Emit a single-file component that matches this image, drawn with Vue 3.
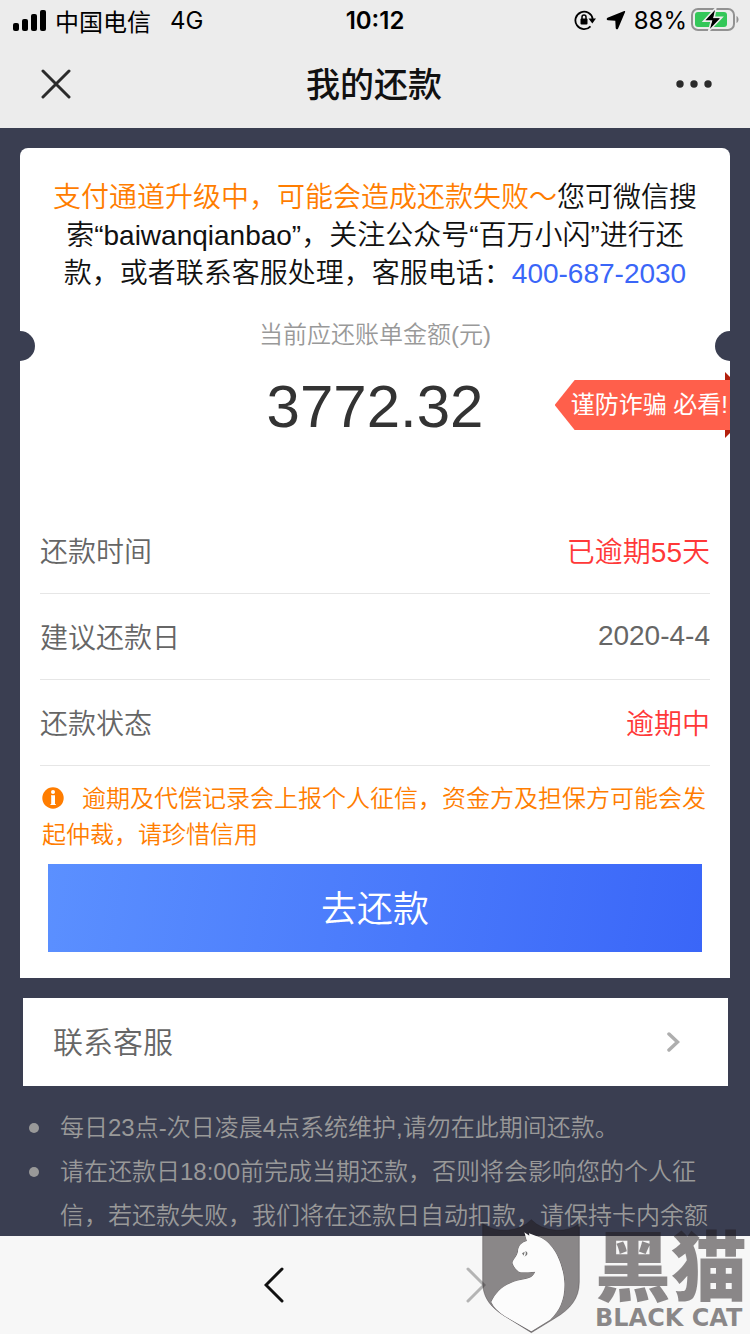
<script setup>
const bill = {
  amount: '3772.32',
  rows: [
    { label: '还款时间', value: '已逾期55天', warn: true },
    { label: '建议还款日', value: '2020-4-4', warn: false },
    { label: '还款状态', value: '逾期中', warn: true },
  ],
}

const notes = [
  '每日23点-次日凌晨4点系统维护,请勿在此期间还款。',
  '请在还款日18:00前完成当期还款，否则将会影响您的个人征信，若还款失败，我们将在还款日自动扣款，请保持卡内余额',
]
</script>

<template>
  <div class="page">
    <div class="status-bar">
      <div class="status-side">
        <svg class="signal" width="34" height="22" viewBox="0 0 34 22">
          <rect x="1" y="14" width="6" height="8" rx="2" />
          <rect x="10" y="10" width="6" height="12" rx="2" />
          <rect x="19" y="5" width="6" height="17" rx="2" />
          <rect x="28" y="1" width="6" height="21" rx="2" />
        </svg>
        <span class="carrier">中国电信</span>
        <span>4G</span>
      </div>
      <span class="clock">10:12</span>
      <div class="status-side status-right">
        <svg width="22" height="22" viewBox="0 0 22 22">
          <path d="M16.500 17.300A8.700 8.700 0 1 1 18.700 10" fill="none" stroke="#000" stroke-width="1.800" />
          <path d="M14.500 9.500H22l-3.700 5z" />
          <rect x="6.500" y="9.500" width="7" height="6" rx="1" />
          <path d="M8 10V8a2 2 0 0 1 4 0v2" fill="none" stroke="#000" stroke-width="1.500" />
        </svg>
        <svg class="location" width="20" height="20" viewBox="0 0 20 20">
          <path d="M18.300 1 1.500 7.800c-1.300.6-1 2.400.5 2.500l7.300.4.400 7.400c.1 1.400 1.900 1.700 2.400.4L19.100 2c.2-.7-.2-1.200-.8-1z" />
        </svg>
        <span>88%</span>
        <svg class="battery" width="48" height="24" viewBox="0 0 48 24">
          <rect x="1" y="1" width="42" height="21" rx="6" fill="none" stroke="#929292" stroke-width="2" />
          <path d="M45.500 8v7c1.300-.6 2-2 2-3.500s-.7-2.900-2-3.500z" fill="#929292" />
          <rect x="4" y="4" width="32" height="15" rx="3" fill="#34c759" />
          <path d="M24.500.5 13 13h7.500L18 22.500 30.500 9.500H23z" stroke="#ececec" stroke-width="2" />
          <path d="M24 2 14.500 12.300h7l-2.500 8.500L29 10.200h-7z" />
        </svg>
      </div>
    </div>

    <header class="nav-bar">
      <button type="button" class="icon-btn close-btn" aria-label="关闭">
        <svg width="30" height="30" viewBox="0 0 30 30">
          <path d="M2 2l26 26M28 2 2 28" fill="none" stroke="#2b2b2b" stroke-width="3" stroke-linecap="round" />
        </svg>
      </button>
      <h1 class="nav-title">我的还款</h1>
      <button type="button" class="icon-btn icon-btn-end" aria-label="更多">
        <svg width="36" height="8" viewBox="0 0 36 8">
          <circle cx="4" cy="4" r="3.700" fill="#2b2b2b" />
          <circle cx="18" cy="4" r="3.700" fill="#2b2b2b" />
          <circle cx="32" cy="4" r="3.700" fill="#2b2b2b" />
        </svg>
      </button>
    </header>

    <main class="content">
      <section class="bill-card">
        <p class="notice">
          <span class="notice-warn">支付通道升级中，可能会造成还款失败～</span>您可微信搜索“baiwanqianbao”，关注公众号“百万小闪”进行还款，或者联系客服处理，客服电话：<a href="tel:400-687-2030">400-687-2030</a>
        </p>

        <div class="amount-block">
          <p class="amount-label">当前应还账单金额(元)</p>
          <p class="amount">{{ bill.amount }}</p>
          <a class="fraud-tag" href="#fraud">谨防诈骗 必看!</a>
        </div>

        <dl class="rows">
          <div v-for="row in bill.rows" :key="row.label" class="row">
            <dt>{{ row.label }}</dt>
            <dd :class="{ warn: row.warn }">{{ row.value }}</dd>
          </div>
        </dl>

        <p class="credit-tip">
          <svg class="tip-icon" width="22" height="22" viewBox="0 0 22 22">
            <circle cx="11" cy="11" r="10.700" fill="#ff7d00" />
            <circle cx="11" cy="5" r="2" fill="#fff" />
            <path d="M9 8.300h4v8.700h.8v1H8.500v-1h.7V9.300H9z" fill="#fff" />
          </svg>逾期及代偿记录会上报个人征信，资金方及担保方可能会发起仲裁，请珍惜信用
        </p>

        <button type="button" class="pay-btn">去还款</button>
      </section>

      <a class="service" href="#service">
        <span>联系客服</span>
        <svg width="14" height="20" viewBox="0 0 14 20">
          <path d="M3 2l8.500 8L3 18" fill="none" stroke="#aeaeae" stroke-width="3.500" stroke-linecap="round" />
        </svg>
      </a>

      <ul class="notes">
        <li v-for="note in notes" :key="note">{{ note }}</li>
      </ul>
    </main>

    <footer class="tool-bar">
      <button type="button" class="icon-btn" aria-label="后退">
        <svg width="20" height="36" viewBox="0 0 20 36">
          <path d="M18 2 2 18l16 16" fill="none" stroke="#111" stroke-width="3" stroke-linecap="round" />
        </svg>
      </button>
      <button type="button" class="icon-btn" aria-label="前进" disabled>
        <svg width="20" height="36" viewBox="0 0 20 36">
          <path d="M2 2l16 16L2 34" fill="none" stroke="#b4b4b4" stroke-width="3" stroke-linecap="round" />
        </svg>
      </button>
    </footer>

    <div class="watermark">
      <svg width="98" height="116" viewBox="32 8 294 348">
        <path
          class="shield"
          fill-rule="evenodd"
          d="M34 25Q64 46 104 45Q152 42 180 13Q208 42 256 45Q296 46 324 25V200C324 250 296 282 252 308L180 352L106 306C62 280 34 250 34 200zM159 51L167 77C150 82 141 92 140 110C136 126 123 134 124 144C128 157 138 168 148 171Q170 171 192 169C184 190 166 190 145 195C100 206 76 226 60 260Q70 282 100 302L180 348L236 313C266 285 280 250 279 205C277 145 245 80 204 66L173 54L174 61z"
        />
        <path
          fill="#fcfcfc"
          d="M159 51L167 77C150 82 141 92 140 110C136 126 123 134 124 144C128 157 138 168 148 171Q170 171 192 169C184 190 166 190 145 195C100 206 76 226 60 260Q70 282 100 302L180 348L236 313C266 285 280 250 279 205C277 145 245 80 204 66L173 54L174 61z"
        />
        <path d="M152 114l8-5-3 12zM162 107q9 3 5 12l-8 5q7-7 3-17z" fill="#777" />
      </svg>
      <div class="watermark-text">
        <span class="watermark-cn">黑猫</span>
        <span class="watermark-en">BLACK CAT</span>
      </div>
    </div>
  </div>
</template>

<style>
body {
  margin: 0;
}
</style>

<style scoped>
.page {
  position: relative;
  display: flex;
  flex-direction: column;
  height: 100vh;
  overflow: hidden;
  background: #3a3e51;
  color: #111;
  font-family: 'Liberation Sans', 'Noto Sans CJK SC', sans-serif;
  font-weight: 350;
}

p,
h1,
dl,
dd,
ul {
  margin: 0;
  padding: 0;
}

a {
  color: inherit;
  text-decoration: none;
}

button {
  margin: 0;
  padding: 0;
  border: 0;
  background: none;
  font: inherit;
}

svg {
  display: block;
  flex-shrink: 0;
}

.status-bar {
  display: flex;
  align-items: center;
  flex-shrink: 0;
  height: 40px;
  padding: 0 12px;
  background: #ececec;
  color: #000;
  font-family: Inter, 'Noto Sans CJK SC', sans-serif;
  font-size: 24px;
  font-weight: 400;
}

.status-side {
  display: flex;
  flex: 1;
  align-items: center;
}

.status-right {
  justify-content: flex-end;
}

.signal {
  margin-right: 9px;
}

.carrier {
  margin-right: 19px;
}

.clock {
  font-weight: 600;
}

.location {
  margin: 0 8px 0 10px;
}

.battery {
  margin: 0 -1px 0 4px;
}

.nav-bar {
  display: flex;
  align-items: center;
  flex-shrink: 0;
  height: 88px;
  padding: 0 38px 0 36px;
  background: #ececec;
}

.nav-title {
  padding-top: 2px;
  font-size: 34px;
  font-weight: 500;
  line-height: 44px;
}

.icon-btn {
  display: flex;
}

.nav-bar .icon-btn {
  flex: 1;
}

.close-btn svg {
  margin-left: 5px;
}

.icon-btn-end {
  justify-content: flex-end;
}

.content {
  flex: 1;
  min-height: 0;
  padding: 20px 20px 0;
  overflow-y: auto;
  scrollbar-width: none;
}

.bill-card {
  position: relative;
  padding: 31px 20px 26px;
  border-radius: 8px 8px 0 0;
  background: #fff;
}

/* ticket notches */
.bill-card::before,
.bill-card::after {
  content: '';
  position: absolute;
  top: 183px;
  width: 15px;
  height: 30px;
  background: #3a3e51;
}

.bill-card::before {
  left: 0;
  border-radius: 0 15px 15px 0;
}

.bill-card::after {
  right: 0;
  border-radius: 15px 0 0 15px;
}

.notice {
  padding: 0 10px;
  font-size: 28px;
  line-height: 38px;
  text-align: center;
}

.notice-warn {
  color: #ff7d00;
}

.notice a {
  color: #3a66f8;
}

.amount-block {
  position: relative;
  isolation: isolate;
  padding: 24px 0 65px;
  text-align: center;
}

.amount-label {
  color: #999;
  font-size: 24px;
  line-height: 36px;
}

.amount {
  margin-top: 18px;
  color: #333;
  font-size: 60px;
  line-height: 72px;
}

.fraud-tag {
  position: absolute;
  top: 87px;
  right: -20px;
  padding: 0 2px 0 16px;
  color: #fff;
  font-size: 24px;
  font-weight: 400;
  line-height: 50px;
  white-space: nowrap;
}

.fraud-tag::before {
  content: '';
  position: absolute;
  inset: 0;
  z-index: -1;
  background: #ff5f4b;
  clip-path: polygon(0 50%, 20px 0, 100% 0, 100% 100%, 20px 100%);
}

/* folded ends behind the ribbon */
.fraud-tag::after {
  content: '';
  position: absolute;
  top: -8px;
  right: 0;
  bottom: -8px;
  z-index: -2;
  width: 5px;
  background: #b3200c;
  clip-path: polygon(0 0, 100% 5px, 100% calc(100% - 5px), 0 100%);
}

.row {
  display: flex;
  align-items: center;
  justify-content: space-between;
  height: 83px;
  padding-bottom: 2px;
  border-bottom: 1px solid #e6e6e6;
  color: #666;
  font-size: 28px;
}

.warn {
  color: #ff3838;
}

.credit-tip {
  padding: 15px 0 0 2px;
  color: #ff7d00;
  font-size: 24px;
  line-height: 36px;
}

.tip-icon {
  display: inline-block;
  margin-right: 18px;
  vertical-align: -2px;
}

.pay-btn {
  display: block;
  width: calc(100% - 16px);
  height: 88px;
  margin: 11px 8px 0;
  padding-bottom: 4px;
  background: linear-gradient(100deg, #5b90ff, #3a66f8);
  color: #fff;
  font-size: 36px;
}

.service {
  display: flex;
  align-items: center;
  justify-content: space-between;
  height: 88px;
  margin: 20px 2px 0 3px;
  padding: 0 48px 0 30px;
  background: #fff;
  color: #666;
  font-size: 30px;
}

.service span {
  padding-bottom: 4px;
}

.notes {
  padding: 20px 0 0 40px;
  color: #999;
  font-size: 24px;
  line-height: 44px;
  list-style: none;
}

.notes li {
  position: relative;
}

.notes li::before {
  content: '';
  position: absolute;
  top: 17px;
  left: -31px;
  width: 10px;
  height: 10px;
  border-radius: 50%;
  background: #999;
}

.tool-bar {
  display: flex;
  align-items: center;
  justify-content: center;
  gap: 182px;
  flex-shrink: 0;
  height: 98px;
  background: #f7f7f7;
}

.watermark {
  position: absolute;
  right: 3px;
  bottom: 0;
  display: flex;
  align-items: flex-end;
  gap: 15px;
  color: rgba(30, 24, 26, 0.5);
}

.shield {
  fill: rgba(30, 24, 26, 0.5);
  stroke: rgba(30, 24, 26, 0.3);
  stroke-width: 3;
}

.watermark-text {
  display: flex;
  flex-direction: column;
  padding-bottom: 2px;
}

.watermark-cn {
  padding-bottom: 4px;
  font-family: 'Noto Sans CJK SC', sans-serif;
  font-size: 76px;
  font-weight: 900;
  line-height: 76px;
}

.watermark-en {
  font-family: 'DejaVu Sans', sans-serif;
  font-size: 24px;
  font-weight: 700;
  line-height: 28px;
}
</style>
